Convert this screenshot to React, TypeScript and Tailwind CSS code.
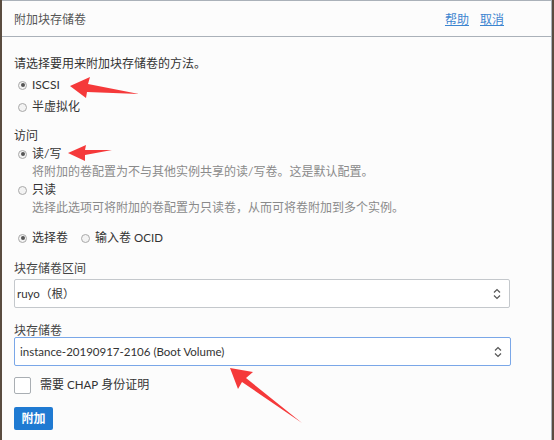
import React from 'react';

const font = { fontFamily: 'Lato, "Noto Sans CJK SC", sans-serif' };

function Radio({ checked, label }: { checked?: boolean; label: React.ReactNode }) {
  return (
    <label className="flex items-center gap-[5px]">
      <span className="w-[9px] h-[9px] rounded-full border border-[#a9a9a9] bg-[#f3f3f3] flex items-center justify-center">
        {checked && <span className="w-[4px] h-[4px] rounded-full bg-[#555]" />}
      </span>
      <span>{label}</span>
    </label>
  );
}

function SelectBox({ value, focused }: { value: string; focused?: boolean }) {
  return (
    <div
      className={
        'h-[29px] flex items-center justify-between pr-[8px] bg-white rounded-[2px] border ' +
        (focused ? 'border-[#7aa7e8] pl-[5px]' : 'border-[#c4c8cc] pl-[2px]')
      }
    >
      <span className="text-[11.5px] text-[#333]">{value}</span>
      <svg width="8" height="12" viewBox="0 0 8 12" fill="none" stroke="#555" strokeWidth="1.2">
        <path d="M1 4.5 L4 1.5 L7 4.5" />
        <path d="M1 7.5 L4 10.5 L7 7.5" />
      </svg>
    </div>
  );
}

export default function App() {
  return (
    <div className="w-[554px] h-[440px] bg-[#5a4c40] pl-[2px] overflow-hidden" style={font}>
      <div className="relative w-[550px] h-[440px] bg-[#fcfcfc] border-t border-r border-[#aab1b9] text-[12px] text-[#333]">
        {/* Header */}
        <div className="h-[36px] border-b border-[#aab1b9] flex items-center justify-between pl-[12px] pr-[47px]">
          <span className="text-[12px] text-[#555] pt-[2px]">附加块存储卷</span>
          <div className="flex gap-[11px] pt-[2px] text-[12px]">
            <a className="text-[#3c85d0] underline">帮助</a>
            <a className="text-[#3c85d0] underline">取消</a>
          </div>
        </div>

        <div className="pl-[12px] pr-[11px] pt-[17px]">
          <div className="leading-[20px]">请选择要用来附加块存储卷的方法。</div>
          <div className="pl-[4px] leading-[22px]">
            <Radio checked label="ISCSI" />
            <Radio label="半虚拟化" />
          </div>

          <div className="mt-[9px] leading-[18px]">访问</div>
          <div className="pl-[4px] leading-[18px]">
            <Radio checked label="读/写" />
            <div className="pl-[14px] text-[#8a8a8a]">将附加的卷配置为不与其他实例共享的读/写卷。这是默认配置。</div>
            <Radio label="只读" />
            <div className="pl-[14px] text-[#8a8a8a]">选择此选项可将附加的卷配置为只读卷，从而可将卷附加到多个实例。</div>
          </div>

          <div className="pl-[4px] mt-[11px] flex gap-[13px] leading-[20px]">
            <Radio checked label="选择卷" />
            <Radio label={<>输入卷 <span className="text-[11.5px]">OCID</span></>} />
          </div>

          <div className="mt-[11px] leading-[20px] text-[#444]">块存储卷区间</div>
          <div className="w-[496px]">
            <SelectBox value="ruyo（根）" />
          </div>

          <div className="mt-[16px] leading-[13px] text-[#444]">块存储卷</div>
          <div className="w-[497px]">
            <SelectBox value="instance-20190917-2106 (Boot Volume)" focused />
          </div>

          <div className="mt-[10px] flex items-center gap-[9px]">
            <span className="w-[17px] h-[17px] rounded-[2px] border border-[#a9aeb3] bg-white" />
            <span>
              需要 <span className="text-[11.5px]">CHAP</span> 身份证明
            </span>
          </div>

          <button className="mt-[13px] h-[23px] w-[39px] rounded-[2px] bg-[#1f7ad2] text-white text-[12px] font-bold flex items-center justify-center">
            附加
          </button>
        </div>

        {/* annotation arrows */}
        <svg className="absolute left-0 top-0 pointer-events-none" width="550" height="440">
          <polygon points="68,85 88,76 86,83 137,93 85,91 84,97" fill="#f5393a" />
          <polygon points="66,152 84,144 83,149 110,149 83,154 83,160" fill="#f5393a" />
          <polygon points="228,367 251,371 244,377 300,422 240,381 236,388" fill="#f5393a" />
        </svg>
      </div>
    </div>
  );
}
